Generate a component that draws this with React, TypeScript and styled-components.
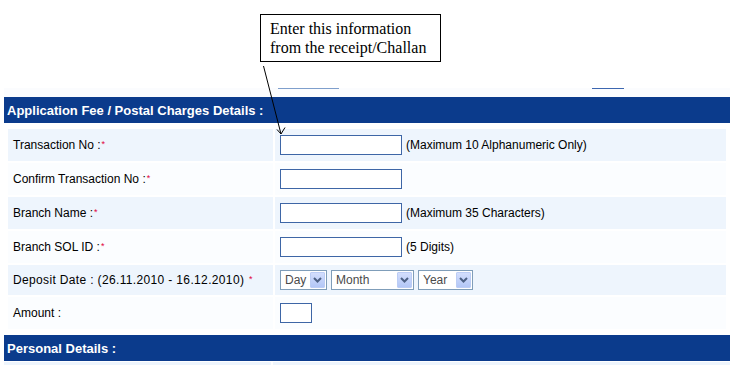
import React from 'react';
import styled, { createGlobalStyle } from 'styled-components';

const GlobalStyle = createGlobalStyle`
    html, body {
        margin: 0;
        padding: 0;
        background: #ffffff;
    }
    body {
        font-family: "Liberation Sans", Arial, sans-serif;
        font-size: 12px;
        color: #000000;
    }
`;

const Page = styled.div`
    position: relative;
    width: 749px;
    height: 384px;
    overflow: hidden;
`;

const Form = styled.div`
    margin-left: 4px;
    width: 726px;
    padding-top: 88px;
`;

const LinkRow = styled.div`
    display: flex;
    height: 9px;
    background: #fbfcfe;
`;

const LinkLine = styled.span<{ $left: number; $width: number; $color: string }>`
    margin-left: ${p => p.$left}px;
    width: ${p => p.$width}px;
    height: 0;
    border-top: 1px solid ${p => p.$color};
`;

const SectionHeader = styled.div`
    display: flex;
    align-items: center;
    height: 26px;
    padding-left: 3px;
    background: #0b3b8c;
    color: #ffffff;
    font-weight: bold;
    font-size: 13px;
`;

const Rows = styled.div`
    display: flex;
    flex-direction: column;
    gap: 2px;
    padding: 6px 4px;
`;

const Row = styled.div<{ $height: number }>`
    display: grid;
    grid-template-columns: 265px 1fr;
    column-gap: 2px;
    height: ${p => p.$height}px;
`;

const Cell = styled.div<{ $alt: boolean }>`
    display: flex;
    align-items: center;
    gap: 4px;
    padding-left: 5px;
    background: ${p => (p.$alt ? '#eef5fd' : '#fbfdff')};
`;

const Label = styled.span<{ $spread: boolean }>`
    white-space: nowrap;
    letter-spacing: ${p => (p.$spread ? '0.35px' : 'normal')};
`;

const Star = styled.span`
    color: #e0003c;
    font-size: 9px;
    position: relative;
    top: -2px;
    margin-left: 1px;
`;

const TextBox = styled.input<{ $width: number }>`
    width: ${p => p.$width}px;
    height: 20px;
    box-sizing: border-box;
    margin: 0;
    padding: 0 2px;
    border: 1px solid #3e66a6;
    background: #ffffff;
    font: inherit;
`;

const Hint = styled.span`
    white-space: nowrap;
`;

const SelectFrame = styled.label<{ $width: number }>`
    display: flex;
    align-items: center;
    width: ${p => p.$width}px;
    height: 20px;
    box-sizing: border-box;
    padding: 1px;
    border: 1px solid #7f9db9;
    background: #ffffff;
`;

const Select = styled.select`
    flex: 1;
    min-width: 0;
    height: 100%;
    margin: 0;
    padding: 0 0 0 3px;
    border: 0;
    outline: none;
    appearance: none;
    background: transparent;
    color: #4a4a4a;
    font: inherit;
`;

const DropButton = styled.span`
    display: flex;
    align-items: center;
    justify-content: center;
    width: 15px;
    height: 16px;
    box-sizing: border-box;
    border: 1px solid #bccdf5;
    border-radius: 1px;
    background: linear-gradient(#d3defd, #b3c7f7);
`;

const BottomStrip = styled.div`
    display: grid;
    grid-template-columns: 267px 1fr;
    column-gap: 2px;
    height: 3px;
    margin-top: 1px;
`;

const StripCell = styled.div`
    background: #eef5fd;
`;

const Callout = styled.div`
    position: absolute;
    left: 260px;
    top: 14px;
    width: 181px;
    height: 48px;
    box-sizing: border-box;
    padding: 4px 0 0 9px;
    border: 1px solid #000000;
    background: #ffffff;
    font-family: "Liberation Serif", serif;
    font-size: 16px;
    line-height: 19px;
`;

const ArrowLayer = styled.svg`
    position: absolute;
    left: 0;
    top: 0;
    pointer-events: none;
`;

const Chevron = () => (
    <svg width="9" height="6" viewBox="0 0 9 6">
        <path d="M1 1 L4.5 4.5 L8 1" fill="none" stroke="#4d6185" strokeWidth="2" />
    </svg>
);

const DateSelect = ({ width, label, options }: { width: number; label: string; options: string[] }) => (
    <SelectFrame $width={width}>
        <Select defaultValue="">
            <option value="">{label}</option>
            {options.map(o => (
                <option key={o} value={o}>{o}</option>
            ))}
        </Select>
        <DropButton>
            <Chevron />
        </DropButton>
    </SelectFrame>
);

type Field = {
    label: string;
    required: boolean;
    starGap?: boolean;
    height: number;
    input: React.ReactNode;
    hint?: string;
};

const days = Array.from({ length: 31 }, (_, i) => String(i + 1));
const months = ['January', 'February', 'March', 'April', 'May', 'June', 'July', 'August', 'September', 'October', 'November', 'December'];
const years = ['2010'];

const fields: Field[] = [
    { label: 'Transaction No :', required: true, height: 32, input: <TextBox $width={122} />, hint: '(Maximum 10 Alphanumeric Only)' },
    { label: 'Confirm Transaction No :', required: true, height: 32, input: <TextBox $width={122} /> },
    { label: 'Branch Name :', required: true, height: 32, input: <TextBox $width={122} />, hint: '(Maximum 35 Characters)' },
    { label: 'Branch SOL ID :', required: true, height: 32, input: <TextBox $width={122} />, hint: '(5 Digits)' },
    {
        label: 'Deposit Date : (26.11.2010 - 16.12.2010)',
        required: true,
        starGap: true,
        height: 30,
        input: (
            <>
                <DateSelect width={47} label="Day" options={days} />
                <DateSelect width={83} label="Month" options={months} />
                <DateSelect width={55} label="Year" options={years} />
            </>
        ),
    },
    { label: 'Amount :', required: false, height: 32, input: <TextBox $width={32} /> },
];

const App = () => {
    return (
        <Page>
            <GlobalStyle />
            <Form>
                <LinkRow>
                    <LinkLine $left={274} $width={61} $color="#7f9fcc" />
                    <LinkLine $left={253} $width={32} $color="#3d67b0" />
                </LinkRow>
                <SectionHeader>Application Fee / Postal Charges Details :</SectionHeader>
                <Rows>
                    {fields.map((f, i) => (
                        <Row key={f.label} $height={f.height}>
                            <Cell $alt={i % 2 === 0}>
                                <Label $spread={!!f.starGap}>
                                    {f.label}
                                    {f.starGap ? ' ' : ''}
                                    {f.required && <Star>*</Star>}
                                </Label>
                            </Cell>
                            <Cell $alt={i % 2 === 0}>
                                {f.input}
                                {f.hint && <Hint>{f.hint}</Hint>}
                            </Cell>
                        </Row>
                    ))}
                </Rows>
                <SectionHeader>Personal Details :</SectionHeader>
                <BottomStrip>
                    <StripCell />
                    <StripCell />
                </BottomStrip>
            </Form>

            <Callout>
                Enter this information
                <br />
                from the receipt/Challan
            </Callout>
            <ArrowLayer width="749" height="384" viewBox="0 0 749 384">
                <line x1="263.5" y1="66" x2="281" y2="134" stroke="#000" strokeWidth="1" />
                <path d="M277 129.5 L281 134 L285 127.5" fill="none" stroke="#000" strokeWidth="1" />
            </ArrowLayer>
        </Page>
    );
};

export default App;
